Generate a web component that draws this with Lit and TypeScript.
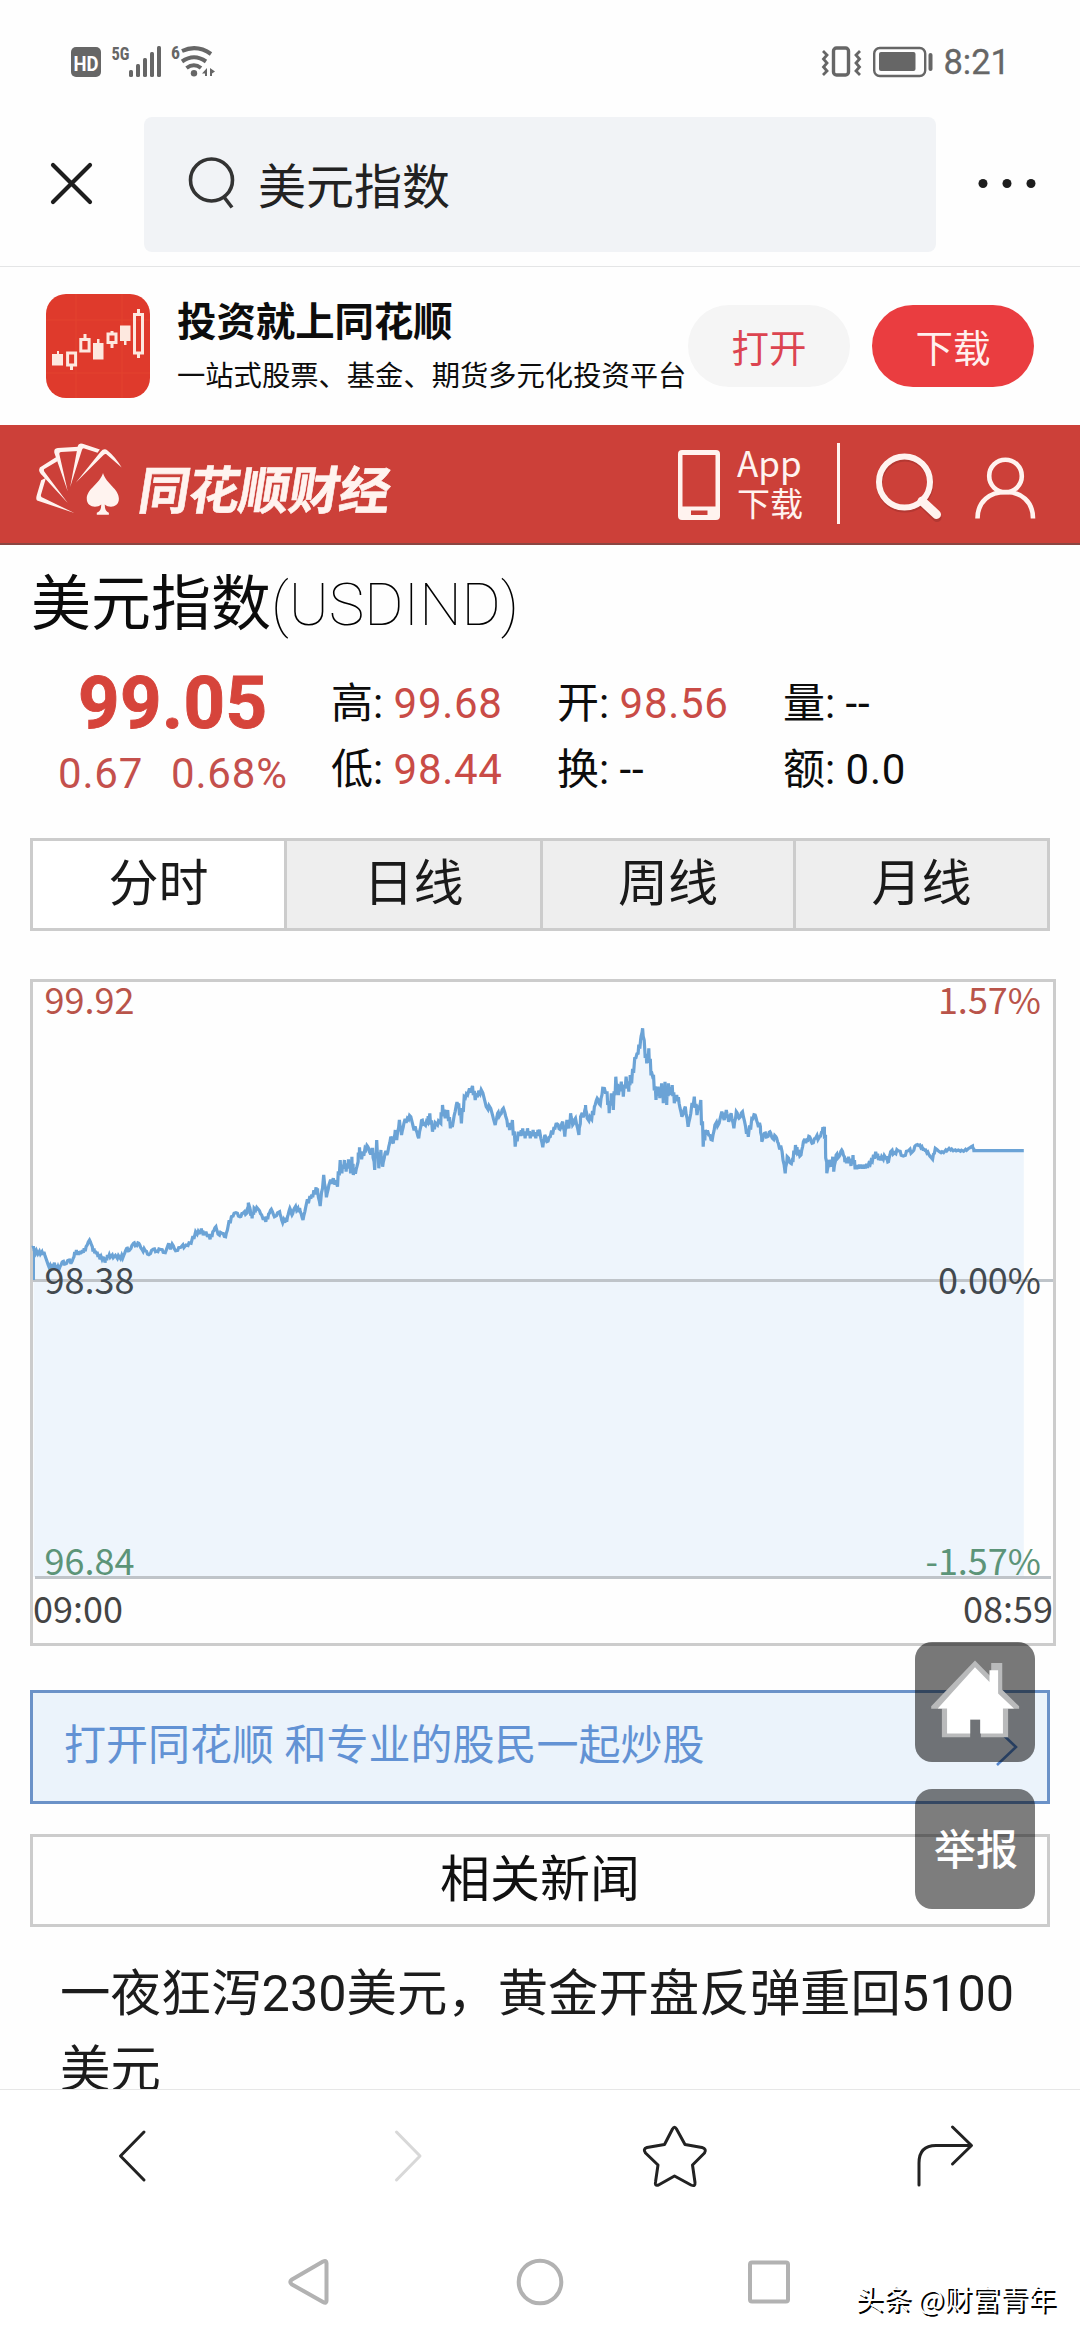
import { LitElement, html, svg, css } from "lit";
import { customElement, state } from "lit/decorators.js";
import { classMap } from "lit/directives/class-map.js";

const FIRST_HALF = [
  97,858,99,870,110,882,122,875,130,885,140,915,150,925,158,908,165,930,175,918,182,905,190,912,200,900,207,908,215,890,222,870,
  228,885,235,872,242,878,250,860,260,840,268,860,275,880,282,875,290,898,300,890,305,908,312,885,320,892,335,886,350,896,360,884,
  368,865,375,872,388,850,395,856,403,850,412,868,422,872,432,884,445,868,455,874,465,868,480,878,490,850,495,868,500,852,510,872,
  525,862,540,855,555,850,568,815,580,822,585,805,590,826,598,815,610,838,618,815,627,800,633,822,645,820,655,830,662,800,672,770,
  685,758,697,770,705,760,718,758,721,728,727,750,732,775,738,745,750,748,760,765,772,785,780,762,788,748,797,770,812,755,818,780,
  827,788,835,770,842,745,848,765,855,745,865,745,872,755,880,780,888,740,900,708,908,712,918,682,923,700,930,738,940,645,948,712,
  955,675,968,655,980,680,988,600,993,640,1000,600,1005,635,1012,598,1018,640,1022,590,1026,645,1035,625,1040,605,1044,562,
  1050,598,1060,565,1068,560,1075,580,1082,568,1088,630,1094,540,1100,625,1106,570,1111,620,1118,580,1126,578,1135,530,1142,550,
  1148,510,1152,540,1160,480,1166,525,1173,490,1183,475,1193,470,1200,500,1208,510,1216,535,1224,482,1232,492,1242,488,1248,460,
  1256,515,1264,488,1280,490,1285,435,1293,475,1300,450,1308,505,1316,485,1325,435,1332,430,1340,490,1348,410,1358,405,1372,378,
  1380,420,1390,392,1402,398,1412,440,1425,445,1438,495,1445,460,1452,465,1462,445,1472,480,1480,510,1488,480,1496,560,1505,515,
  1512,528,1518,505,1525,535,1532,505,1540,535,1548,510,1556,535,1562,510,
];
const SECOND_HALF = [
  0,520,8,562,14,525,20,545,30,530,40,505,50,492,58,508,66,485,72,530,78,480,84,505,89,460,95,495,103,475,113,525,118,470,130,460,
  132,435,137,475,150,478,158,440,166,415,175,435,182,385,195,398,201,460,207,400,213,450,220,350,228,405,236,365,242,410,250,350,
  258,395,262,345,266,370,275,295,285,280,292,240,298,205,304,265,310,310,316,265,322,340,330,350,337,420,343,380,348,415,353,370,
  358,430,363,365,368,435,373,370,380,405,384,375,390,430,397,405,404,430,412,470,422,440,430,500,438,460,448,410,456,465,467,420,
  474,560,480,510,490,525,500,540,508,495,520,490,528,455,535,480,541,450,548,485,555,460,563,505,570,455,578,475,588,455,597,500,
  605,530,615,475,625,465,632,490,640,500,644,545,652,520,660,530,668,515,675,535,685,530,692,550,703,575,712,640,718,590,728,610,
  735,600,742,555,748,580,758,585,765,545,775,540,783,530,790,550,800,535,812,530,820,515,826,500,829,560,833,640,840,600,846,620,
  850,590,853,635,860,585,868,590,876,570,884,590,890,610,896,590,903,618,909,585,915,628,922,615,930,625,938,615,945,625,955,610,
  965,605,975,575,983,600,992,590,1005,595,1012,605,1018,575,1030,578,1040,572,1055,588,1070,572,1082,575,1092,555,1103,555,
  1112,568,1120,570,1130,585,1140,598,1148,565,1160,575,1172,578,1188,565,1200,572,1215,570,1230,574,1245,565,1256,558,1260,572,
  1405,572,
];

function linePath(): string {
  const pts: [number, number][] = [];
  const add = (src: number[], dx: number) => {
    for (let i = 0; i < src.length; i += 2) pts.push([src[i] / 2.904 + dx, src[i + 1] / 3 - 22]);
  };
  add(FIRST_HALF, -33);
  add(SECOND_HALF, 507);
  const out: string[] = [];
  pts.forEach(([x, y], i) => {
    out.push(`${x.toFixed(1)} ${y.toFixed(1)}`);
    const next = pts[i + 1];
    if (next && next[0] - x < 8) {
      // one small tick between two samples
      const amp = x > 880 ? 0.5 : x < 250 ? 1.4 : 2;
      const k = i % 2 ? amp : -amp;
      const mx = (x + next[0]) / 2;
      const my = (y + next[1]) / 2;
      out.push(`${(mx - 0.5).toFixed(1)} ${(my + k).toFixed(1)}`, `${(mx + 0.5).toFixed(1)} ${(my - k).toFixed(1)}`);
    }
  });
  return "M" + out.join("L");
}

@customElement("status-bar")
class StatusBar extends LitElement {
  static styles = css`
    :host { display: block; height: 117px; color: #666; font-family: Roboto, sans-serif; }
    .bar { display: flex; justify-content: space-between; padding: 40px 70px 0 70px; height: 44px; }
    .right { display: flex; align-items: center; }
    .time { font-size: 34.5px; line-height: 44px; margin-left: 9px; -webkit-text-stroke: 0.300px #666; }
    .hd { font: 700 20px Roboto, sans-serif; }
    .gen { font: 700 18.500px "Roboto Condensed", Roboto, sans-serif; }
  `;
  render() {
    return html`<div class="bar">
      <svg width="150" height="44" viewBox="70 40 150 44" fill="#666">
        <rect x="71" y="47" width="30" height="30" rx="5" />
        <text class="hd" x="73.5" y="70.5" fill="#fff" textLength="25" lengthAdjust="spacingAndGlyphs">HD</text>
        <text class="gen" x="111.500" y="59.500" textLength="18" lengthAdjust="spacingAndGlyphs">5G</text>
        <rect x="129" y="70" width="4" height="7" rx="1.5" />
        <rect x="136" y="64" width="4" height="13" rx="1.5" />
        <rect x="143" y="58" width="4" height="19" rx="1.5" />
        <rect x="150" y="52" width="4" height="25" rx="1.5" />
        <rect x="157" y="46" width="4" height="31" rx="1.5" />
        <text class="gen" x="171" y="59" textLength="9" lengthAdjust="spacingAndGlyphs">6</text>
        <g fill="none" stroke="#666" stroke-width="4">
          <path d="M182 51Q197 44 211 54" />
          <path d="M182 61.500Q194 53 206 61.500" />
          <path d="M186.500 68Q194 62.500 201 68" />
        </g>
        <circle cx="194" cy="73.300" r="3.200" />
        <path d="M207 68V76H205V73.500H202ZM210 68L215 71.500L212 73.500V76H210Z" />
      </svg>
      <div class="right">
        <svg width="114" height="44" viewBox="821 40 114 44" fill="none" stroke="#666">
          <path d="M824 51L828 55L824.500 59L828 63L824.500 67L828 71L824 75M861 51L857 55L860.500 59L857 63L860.500 67L857 71L861 75" stroke-width="2.800" />
          <rect x="834.500" y="48" width="15" height="27" rx="3" stroke-width="3.400" />
          <rect x="875.200" y="48" width="51" height="28" rx="5.500" stroke-width="2.400" />
          <rect x="880" y="52" width="36.500" height="19" rx="2" fill="#666" stroke="none" />
          <path d="M931.500 55V69" stroke-width="4" stroke-linecap="round" />
        </svg>
        <span class="time">8:21</span>
      </div>
    </div>`;
  }
}

@customElement("search-bar")
class SearchBar extends LitElement {
  static styles = css`
    :host { display: block; box-sizing: border-box; height: 150px; border-bottom: 1.500px solid #e4e5e6; font-family: "Noto Sans CJK SC", sans-serif; }
    .row { display: flex; align-items: center; height: 135px; }
    .close { width: 144px; height: 135px; }
    .field { display: flex; align-items: center; width: 792px; height: 135px; background: #f1f3f6; border-radius: 8px; }
    .glass { margin-left: 40px; }
    .query { font-size: 48px; line-height: 60px; color: #222; margin: 0 0 3px 20px; }
    .more { margin-left: 37px; }
  `;
  render() {
    return html`<div class="row">
      <svg class="close" viewBox="0 117 144 135" stroke="#1d1d1d" stroke-width="4.200" stroke-linecap="round">
        <path d="M53 165L90 202M90 165L53 202" />
      </svg>
      <div class="field">
        <svg class="glass" width="54" height="60" viewBox="184 154 54 60" fill="none" stroke="#333" stroke-width="3.600">
          <circle cx="211.500" cy="179" r="21" /><path d="M224 196L232 206.500" />
        </svg>
        <span class="query">美元指数</span>
      </div>
      <svg class="more" width="70" height="20" viewBox="973 175 70 20" fill="#1d1d1d">
        <circle cx="983" cy="183.500" r="4.500" /><circle cx="1007" cy="183.500" r="4.500" /><circle cx="1031" cy="183.500" r="4.500" />
      </svg>
    </div>`;
  }
}

@customElement("app-banner")
class AppBanner extends LitElement {
  static styles = css`
    :host { display: block; height: 158px; font-family: "Noto Sans CJK SC", sans-serif; }
    .row { display: flex; height: 158px; }
    .icon { margin: 27px 0 0 46px; }
    .copy { margin-left: 27px; width: 511px; padding-top: 30px; white-space: nowrap; color: #0d0d0d; }
    .title { font-size: 39.400px; line-height: 44px; font-weight: 700; }
    .sub { font-size: 28.300px; line-height: 40px; margin-top: 13px; }
    .btn { width: 162px; height: 82px; margin-top: 38px; border-radius: 41px; text-align: center; font-size: 37.500px; line-height: 81px; }
    .open { background: #f5f5f5; color: #dc4450; }
    .get { background: #ea3d40; color: #fff0ee; margin-left: 22px; }
  `;
  render() {
    return html`<div class="row">
      <svg class="icon" width="104" height="104" viewBox="0 0 104 104">
        <rect width="104" height="104" rx="20" fill="#df3a2c" />
        <path d="M30 0V104M76 0V104M0 26H104M0 79H104" stroke="#e3422f" />
        <g fill="#fde8df">
          <rect x="6" y="60" width="11" height="11.500" /><rect x="11" y="57" width="2" height="4" />
          <rect x="47" y="49" width="10.500" height="16.500" /><rect x="51" y="45" width="2.500" height="5" />
          <rect x="74" y="31.500" width="10.500" height="15.500" /><rect x="78" y="46" width="2.500" height="5" />
        </g>
        <g fill="none" stroke="#fde8df" stroke-width="3">
          <rect x="21.600" y="59" width="8" height="12" /><path d="M25.500 71V76" />
          <rect x="34.800" y="45.500" width="8.300" height="11.500" /><path d="M39 45V40" />
          <rect x="62" y="40" width="8" height="8.500" /><path d="M66 49V54M66 40V37" />
          <rect x="88.500" y="20.500" width="8" height="38.500" /><path d="M92.500 20V15M92.500 59V64" />
        </g>
      </svg>
      <div class="copy">
        <div class="title">投资就上同花顺</div>
        <div class="sub">一站式股票、基金、期货多元化投资平台</div>
      </div>
      <div class="btn open">打开</div>
      <div class="btn get">下载</div>
    </div>`;
  }
}

@customElement("site-header")
class SiteHeader extends LitElement {
  static styles = css`
    :host { display: block; box-sizing: border-box; height: 120px; background: #cc4039; border-bottom: 2px solid #8a4642; color: #fff3ef; font-family: "Noto Sans CJK SC", sans-serif; }
    .row { display: flex; height: 118px; }
    .cards { margin: 18px 0 0 36px; }
    .brand { margin: 32px 0 0 18px; width: 538px; }
    .name { display: inline-block; transform: skewX(-9deg); font-size: 51px; line-height: 60px; font-weight: 700; letter-spacing: -0.900px; white-space: nowrap; -webkit-text-stroke: 0.600px #fff3ef; }
    .phone { margin-top: 25px; }
    .app { margin: 17px 0 0 17px; width: 100px; font-size: 33px; line-height: 40px; }
    .app .en { display: block; font-size: 35px; }
    .rule { width: 3px; height: 81px; margin-top: 18px; background: #fff3ef; }
    .tools { margin: 18px 0 0 30px; }
  `;
  render() {
    return html`<div class="row">
      <svg class="cards" width="86" height="72" viewBox="105 519 249 214" preserveAspectRatio="none" fill="#fff3ef">
        <path d="M216 727L108 690Q104 686 107 675L120 630L134 622L119 674Q119 680 125 682Z" />
        <path d="M197 697L124 616Q110 604 116 592L165 560L167 573L128 597Q126 602 132 608Z" />
        <path d="M197 663L158 548Q156 535 168 534L228 530L229 543L178 546Q171 547 173 554Z" />
        <path d="M204 650L226 528Q228 518 240 521L290 538L283 548L245 535Q239 534 238 540Z" />
        <path d="M220 637L292 545Q302 533 312 541Q335 560 353 592L308 552Q303 550 299 556Z" />
        <path d="M299 608C308 640 345 655 345 685C345 710 318 714 304 702Q304 722 316 726V732H281V726Q294 722 294 702C280 714 252 710 252 685C252 655 290 640 299 608Z" />
      </svg>
      <div class="brand"><span class="name">同花顺财经</span></div>
      <svg class="phone" width="42" height="70" viewBox="0 0 42 70">
        <path fill="#fff3ef" fill-rule="evenodd" d="M4 0H38Q42 0 42 4V66Q42 70 38 70H4Q0 70 0 66V4Q0 0 4 0ZM4.500 5V56.500H37.500V5ZM13 60.500V65H29.500V60.500Z" />
      </svg>
      <div class="app"><span class="en">App</span>下载</div>
      <div class="rule"></div>
      <svg class="tools" width="170" height="84" viewBox="870 443 170 84" fill="none" stroke="#fff3ef">
        <g stroke="#9c302b" stroke-opacity=".5" transform="translate(0.500 2)">
          <circle cx="904.500" cy="482" r="25.500" stroke-width="6" /><path d="M923 502L936.500 515.500" stroke-width="9" stroke-linecap="round" />
        </g>
        <circle cx="904.500" cy="482" r="25.500" stroke-width="6" />
        <path d="M922 501L936.500 514.500" stroke-width="9" stroke-linecap="round" />
        <circle cx="1005.500" cy="476" r="16.300" stroke-width="4.600" />
        <path d="M977.500 518.500C977.500 501 990 492 1005.500 492S1033 501 1033 518.500" stroke-width="4.600" />
      </svg>
    </div>`;
  }
}

@customElement("quote-panel")
class QuotePanel extends LitElement {
  static styles = css`
    :host { display: block; height: 293px; font-family: Roboto, "Noto Sans CJK SC", sans-serif; color: #0c0c0c; }
    .title { font-size: 60px; line-height: 86px; padding: 11px 0 0 1px; white-space: nowrap; }
    .cn { font-family: "Noto Sans CJK SC", sans-serif; }
    .code { font-weight: 100; color: #000; }
    .row { display: flex; }
    .price { width: 301px; color: #d6443b; }
    .last { font-size: 72.500px; font-weight: 700; line-height: 84px; padding: 14px 0 0 48px; letter-spacing: 0.400px; -webkit-text-stroke: 0.900px #d6443b; }
    .diff { display: flex; gap: 28px; padding: 1px 0 0 28px; font-size: 42px; line-height: 54px; color: #c4504c; letter-spacing: 0.800px; }
    .grid { display: grid; grid-template-columns: repeat(3, 226px); grid-auto-rows: 66px; margin-top: 23px; }
    .cell { font-size: 42px; line-height: 66px; white-space: nowrap; }
    .v { letter-spacing: 0.700px; }
    .up { color: #c94b46; }
  `;
  private stats = [
    ["高", "99.68", true], ["开", "98.56", true], ["量", "--", false],
    ["低", "98.44", true], ["换", "--", false], ["额", "0.0", false],
  ] as const;
  render() {
    return html`<div class="title"><span class="cn">美元指数</span><span class="code">(USDIND)</span></div>
      <div class="row">
        <div class="price">
          <div class="last">99.05</div>
          <div class="diff"><span>0.67</span><span>0.68%</span></div>
        </div>
        <div class="grid">
          ${this.stats.map(([k, v, up]) => html`<div class="cell"><span>${k}: </span><span class=${classMap({ v: true, up })}>${v}</span></div>`)}
        </div>
      </div>`;
  }
}

@customElement("quote-chart")
class QuoteChart extends LitElement {
  static styles = css`
    :host { display: block; box-sizing: border-box; width: 1026px; height: 667px; border: 3px solid #ccc; }
    .plot { display: block; overflow: visible; }
    .t { font: 36px "Noto Sans CJK SC", sans-serif; }
  `;
  render() {
    const d = linePath();
    return html`<svg class="plot" width="1020" height="661" viewBox="0 0 1020 661">
      <path d="${d}V595H0.500V264Z" fill="#eef5fc" />
      <path d="M0 298.500H1020M2 595.500H1018" stroke="#bfc4c9" stroke-width="2.800" />
      <path d="${d}" fill="none" stroke="#6ba3d6" stroke-width="3.200" stroke-linejoin="miter" stroke-miterlimit="3" />
      <path d="M1 264V298" stroke="#6ba3d6" stroke-width="2" />
      ${[
        { x: 11.5, y: 32, v: "99.92", c: "#b9544a" }, { x: 11.5, y: 312, v: "98.38", c: "#42494f" },
        { x: 11.5, y: 592.500, v: "96.84", c: "#5c9478" }, { x: 0, y: 641, v: "09:00", c: "#444" },
      ].map((l) => svg`<text class="t" x=${l.x} y=${l.y} fill=${l.c}>${l.v}</text>`)}
      ${[
        { x: 1008, y: 32, v: "1.57%", c: "#b9544a" }, { x: 1008, y: 312, v: "0.00%", c: "#42494f" },
        { x: 1008, y: 592.500, v: "-1.57%", c: "#5c9478" }, { x: 1020, y: 641, v: "08:59", c: "#444" },
      ].map((l) => svg`<text class="t" text-anchor="end" x=${l.x} y=${l.y} fill=${l.c}>${l.v}</text>`)}
    </svg>`;
  }
}

@customElement("bottom-bars")
class BottomBars extends LitElement {
  static styles = css`
    :host { display: block; box-sizing: border-box; height: 251px; border-top: 1.500px solid #e6e6e6; background: #fff; }
    .tools { display: flex; padding: 30px 0 0 110px; height: 75px; }
    .fwd { margin-left: 223px; }
    .star, .share { margin-left: 204px; }
    .nav { display: flex; padding: 57px 0 0 283px; }
    .home { margin-left: 176px; }
    .recent { margin-left: 174px; }
    svg { fill: none; stroke: #222; stroke-width: 3; stroke-linecap: round; stroke-linejoin: round; }
    .off { stroke: #d8d8d8; }
    .nav svg { stroke: #b2b2b2; stroke-width: 4; }
  `;
  render() {
    return html`<div class="tools">
        <svg width="50" height="75" viewBox="110 2120 50 75"><path d="M144 2132L120.500 2156L144 2180" /></svg>
        <svg class="off fwd" width="50" height="75" viewBox="383 2120 50 75"><path d="M396.500 2132L420 2156L396.500 2180" /></svg>
        <svg class="star" width="74" height="75" viewBox="637 2120 74 75"><path d="M672.500 2129Q674.500 2125.500 676.500 2129L685 2144.500L702 2147.500Q707 2149 704.500 2153L692.500 2165L695 2182.500Q695.500 2187 691 2185L674.500 2176L658.500 2185Q654.500 2186.500 655.500 2182L658 2165L645.500 2153Q642.500 2149 647 2147.500L664.500 2144.500Z" /></svg>
        <svg class="share" width="62" height="75" viewBox="915 2120 62 75"><path d="M919 2185V2163Q919 2145.500 936 2145.500H971M952.500 2127L971.500 2145.500L952.500 2164" /></svg>
      </div>
      <div class="nav">
        <svg width="50" height="60" viewBox="283 2252 50 60"><path d="M323 2261.500Q326.500 2260 326.500 2263V2301Q326.500 2304 323 2302L292 2284.500Q288.500 2282 292 2279.500Z" /></svg>
        <svg class="home" width="60" height="60" viewBox="509 2252 60 60"><circle cx="540" cy="2282" r="21.300" /></svg>
        <svg class="recent" width="52" height="60" viewBox="743 2252 52 60"><rect x="750" y="2262.500" width="38" height="39" rx="2" /></svg>
      </div>`;
  }
}

@customElement("app-root")
class AppRoot extends LitElement {
  static styles = css`
    :host { display: block; width: 1080px; height: 2340px; overflow: hidden; position: relative; background: #fefefe; }
    .page { display: flex; flex-direction: column; height: 2340px; }
    .content { height: 1544px; flex: none; overflow: hidden; padding: 0 30px; font-family: Roboto, "Noto Sans CJK SC", sans-serif; box-sizing: border-box; width: 1080px; }
    .tabs { display: grid; grid-template-columns: 251px 256px 253px 1fr; box-sizing: border-box; height: 93px; border: 3px solid #ccc; }
    .tab { background: #eee; border-left: 3px solid #ccc; text-align: center; font-size: 50px; line-height: 86px; color: #1a1a1a; }
    .tab:first-child { border-left: 0; }
    .tab.active { background: #fff; }
    .chart { margin-top: 48px; }
    .promo { display: flex; align-items: center; justify-content: space-between; box-sizing: border-box; height: 114px; margin-top: 44px; padding: 0 29px 0 31px; border: 3px solid #6b92c8; background: #ebf3fb; color: #6292d4; font-size: 42px; line-height: 60px; }
    .label { margin-bottom: 2px; }
    .heading { box-sizing: border-box; height: 93px; margin-top: 30px; border: 3px solid #ccc; text-align: center; font-size: 50px; line-height: 86px; color: #111; }
    .news { margin: 29px 30px 0; font-size: 50.400px; line-height: 75.600px; color: #1c1c1c; white-space: nowrap; }
    .float { position: absolute; left: 915px; width: 120px; height: 120px; border-radius: 17px; background: rgba(0, 0, 0, 0.53); }
    .home { top: 1642px; }
    .report { top: 1789px; background: rgba(0, 0, 0, 0.51); text-align: center; font: 500 42px/116px "Noto Sans CJK SC", sans-serif; color: #fff; text-indent: 2px; }
    .mark { position: absolute; right: 24px; top: 2276px; font: 28px/44px "Noto Sans CJK SC", sans-serif; color: #fff; text-shadow: 2px 2px 0 #000; white-space: nowrap; }
  `;
  @state() private active = 0;
  private tabs = ["分时", "日线", "周线", "月线"];
  render() {
    return html`<div class="page">
        <status-bar></status-bar>
        <search-bar></search-bar>
        <app-banner></app-banner>
        <site-header></site-header>
        <div class="content">
          <quote-panel></quote-panel>
          <div class="tabs">
            ${this.tabs.map((t, i) => html`<div class=${classMap({ tab: true, active: i === this.active })} @click=${() => (this.active = i)}>${t}</div>`)}
          </div>
          <quote-chart class="chart"></quote-chart>
          <div class="promo">
            <span class="label">打开同花顺 和专业的股民一起炒股</span>
            <svg width="22" height="40" viewBox="0 0 22 40" fill="none" stroke="#5485cc" stroke-width="2.600"><path d="M1 2L20 20L1 38" /></svg>
          </div>
          <div class="heading">相关新闻</div>
          <div class="news">一夜狂泻230美元，黄金开盘反弹重回5100<br />美元</div>
        </div>
        <bottom-bars></bottom-bars>
      </div>
      <div class="float home">
        <svg width="120" height="120" viewBox="1089 286 348 336" preserveAspectRatio="none">
          <path fill="#b9babb" d="M1263 338L1310 384V345H1342V420L1391 466V473H1359V553H1280V503H1249V553H1167V473H1136V466Z" />
          <path fill="#fff" d="M1263 357L1305 398V365H1330V430L1376 472H1344V542H1278V503H1249V542H1182V472H1155Z" />
        </svg>
      </div>
      <div class="float report">举报</div>
      <div class="mark">头条 @财富青年</div>`;
  }
}
